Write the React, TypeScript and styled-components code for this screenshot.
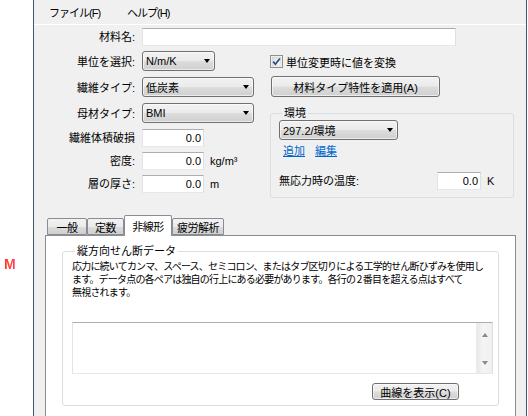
import React from 'react';
import styled, { createGlobalStyle } from 'styled-components';

const Global = createGlobalStyle`
    html, body {
        margin:0;
        padding:0;
        background:#fff;
        overflow:hidden;
    }
    body {
        font-family:"Liberation Sans", "Noto Sans CJK JP", sans-serif;
        font-size:11px;
        color:#000;
    }
`;

const Page = styled.div`
    display:flex;
    width:528px;
    height:416px;
    overflow:hidden;
`;

const Gutter = styled.div`
    width:33px;
    flex:none;
    padding:256px 0 0 4px;
    box-sizing:border-box;
`;

const Badge = styled.span`
    font-family:"Liberation Sans", sans-serif;
    font-weight:700;
    font-size:14px;
    background:linear-gradient(90deg, #ff2a3a 0%, #ff4a20 50%, #ff3a8a 100%);
    -webkit-background-clip:text;
    background-clip:text;
    color:transparent;
`;

const Window = styled.div`
    width:494px;
    height:430px;
    flex:none;
    box-sizing:border-box;
    border-left:1px solid #3d5867;
    border-right:1px solid #3d5867;
    background:#f0f0f0;
    display:flex;
    flex-direction:column;
`;

const MenuBar = styled.div`
    height:24px;
    flex:none;
    display:flex;
    align-items:center;
    gap:27px;
    padding-left:15px;
    border-bottom:1px solid #fff;
    font-size:11px;
    letter-spacing:-1px;
`;

const Form = styled.div`
    padding-top:3px;
`;

const TopRow = styled.div`
    display:grid;
    grid-template-columns:101px 314px;
    column-gap:7px;
    align-items:center;
    height:18px;
    margin-bottom:5px;
`;

const Columns = styled.div`
    display:flex;
`;

const LeftGrid = styled.div`
    width:237px;
    flex:none;
    display:grid;
    grid-template-columns:101px auto;
    grid-template-rows:21px 21px 21px 18px 18px 18px;
    column-gap:7px;
    row-gap:5px;
`;

const Label = styled.div`
    text-align:right;
    align-self:center;
    white-space:nowrap;
    line-height:14px;
`;

const Field = styled.div`
    display:flex;
    align-items:flex-start;
    gap:6px;
`;

const Unit = styled.span`
    align-self:center;
    line-height:14px;
`;

const ComboBox = styled.div<{ $w: number }>`
    width:${p => p.$w}px;
    height:20px;
    flex:none;
    box-sizing:border-box;
    border:1px solid #707070;
    border-radius:3px;
    background:linear-gradient(#f2f2f2 0%, #ebebeb 48%, #dddddd 52%, #cfcfcf 100%);
    box-shadow:inset 0 0 0 1px rgba(255,255,255,0.6);
    display:flex;
    align-items:center;
    justify-content:space-between;
    padding:0 4px 0 3px;
    white-space:nowrap;
`;

const Arrow = styled.span`
    width:0;
    height:0;
    border-left:3.5px solid transparent;
    border-right:3.5px solid transparent;
    border-top:4px solid #000;
`;

const TextInput = styled.div<{ $w: number; $right?: boolean }>`
    width:${p => p.$w}px;
    height:18px;
    flex:none;
    box-sizing:border-box;
    background:#fff;
    border:1px solid;
    border-color:#abadb3 #dbdfe6 #e3e9ef #e2e3ea;
    text-align:${p => (p.$right ? 'right' : 'left')};
    padding:0 2px;
    line-height:16px;
`;

const RightCol = styled.div`
    display:flex;
    flex-direction:column;
    gap:4px;
`;

const CheckRow = styled.label`
    height:21px;
    display:flex;
    align-items:center;
    gap:3px;
    margin-left:-1px;
`;

const Button = styled.div<{ $w: number; $h: number }>`
    width:${p => p.$w}px;
    height:${p => p.$h}px;
    box-sizing:border-box;
    border:1px solid #707070;
    border-radius:3px;
    background:linear-gradient(#f2f2f2 0%, #ebebeb 48%, #dddddd 52%, #cfcfcf 100%);
    box-shadow:inset 0 0 0 1px rgba(255,255,255,0.6);
    display:flex;
    align-items:center;
    justify-content:center;
    white-space:nowrap;
`;

const Group = styled.fieldset`
    margin:0;
    border:1px solid #d5dfe5;
    border-radius:3px;
    min-width:0;
`;

const Legend = styled.legend`
    padding:0 2px;
    margin-left:3px;
    line-height:12px;
    height:12px;
`;

const EnvGroup = styled(Group)`
    width:244px;
    box-sizing:border-box;
    margin:6px 0 0 -1px;
    padding:1px 6px 7px 8px;
    display:flex;
    flex-direction:column;
`;

const Links = styled.div`
    display:flex;
    gap:10px;
    padding-left:4px;
    margin-top:4px;
    line-height:14px;
`;

const Link = styled.a`
    color:#0066cc;
    text-decoration:underline;
`;

const TempRow = styled.div`
    display:flex;
    align-items:center;
    margin-top:14px;
`;

const TempLabel = styled.span`
    flex:1;
    line-height:14px;
`;

const TempUnit = styled.span`
    width:20px;
    margin-left:6px;
`;

const Tabs = styled.div`
    margin:17px 10px 0 11px;
    display:flex;
    flex-direction:column;
`;

const TabStrip = styled.div`
    display:flex;
    align-items:flex-end;
    height:20px;
    padding-left:2px;
    position:relative;
    z-index:1;
`;

const Tab = styled.div<{ $w: number; $active?: boolean }>`
    width:${p => p.$w}px;
    height:${p => (p.$active ? 21 : 17)}px;
    box-sizing:border-box;
    border:1px solid #898c95;
    border-bottom:${p => (p.$active ? 'none' : '1px solid #898c95')};
    border-radius:2px 2px 0 0;
    background:${p => (p.$active ? '#fff' : 'linear-gradient(#f2f2f2 0%, #ebebeb 50%, #dddddd 51%, #cfcfcf 100%)')};
    display:flex;
    align-items:center;
    justify-content:center;
    white-space:nowrap;
    letter-spacing:-0.5px;
    margin-bottom:${p => (p.$active ? -1 : 0)}px;
`;

const Panel = styled.div`
    background:#fff;
    border:1px solid #898c95;
    padding:9px 16px 14px 16px;
`;

const DataGroup = styled(Group)`
    padding:2px 5px 5px 9px;
    display:flex;
    flex-direction:column;
`;

const Para = styled.div`
    font-family:"Noto Sans CJK JP", sans-serif;
    font-size:10px;
    letter-spacing:-0.8px;
    line-height:13px;
    white-space:nowrap;
`;

const ParaLine = styled.span`
    display:block;
`;

const TextBox = styled.div`
    margin-top:24px;
    height:52px;
    box-sizing:border-box;
    border:1px solid;
    border-color:#abadb3 #dbdfe6 #e3e9ef #e2e3ea;
    display:flex;
    justify-content:flex-end;
`;

const ScrollBar = styled.div`
    width:16px;
    background:linear-gradient(90deg, #e9e9e9, #f4f4f4 40%, #f0f0f0);
    border-left:1px solid #ececec;
    display:flex;
    flex-direction:column;
    align-items:center;
    justify-content:space-between;
    padding:10px 0 8px;
    box-sizing:border-box;
`;

const ScrollArrow = styled.span<{ $up?: boolean }>`
    width:0;
    height:0;
    border-left:3.5px solid transparent;
    border-right:3.5px solid transparent;
    ${p => (p.$up ? 'border-bottom:4px solid #8a8a8a;' : 'border-top:4px solid #8a8a8a;')}
`;

const ButtonRow = styled.div`
    display:flex;
    justify-content:flex-end;
    padding-right:34px;
    margin-top:9px;
`;

const Combo = ({ width, value }: { width: number; value: string }) => (
    <ComboBox $w={width}>
        <span>{value}</span>
        <Arrow />
    </ComboBox>
);

const CheckIcon = () => (
    <svg width="13" height="13" viewBox="0 0 13 13">
        <defs>
            <linearGradient id="cb" x1="0" y1="0" x2="1" y2="1">
                <stop offset="0" stopColor="#dcdcdc" />
                <stop offset="1" stopColor="#fbfbfb" />
            </linearGradient>
        </defs>
        <rect x="0.5" y="0.5" width="12" height="12" fill="#fff" stroke="#8f8f8f" />
        <rect x="2" y="2" width="9" height="9" fill="url(#cb)" stroke="#c4c4c4" strokeWidth="0.6" />
        <path d="M3.2 6.6 L5.4 9.2 L9.9 3.4" fill="none" stroke="#2a4a8c" strokeWidth="1.7" />
    </svg>
);

const tabs = [
    { label: '一般', w: 40 },
    { label: '定数', w: 37 },
    { label: '非線形', w: 48, active: true },
    { label: '疲労解析', w: 52 },
];

const lines = [
    '応力に続いてカンマ、スペース、セミコロン、またはタブ区切りによる工学的せん断ひずみを使用し',
    'ます。データ点の各ペアは独自の行上にある必要があります。各行の 2 番目を超える点はすべて',
    '無視されます。',
];

const App = () => {
    return (
        <Page>
            <Global />
            <Gutter><Badge>M</Badge></Gutter>
            <Window>
                <MenuBar>
                    <span>ファイル(F)</span>
                    <span>ヘルプ(H)</span>
                </MenuBar>
                <Form>
                    <TopRow>
                        <Label>材料名:</Label>
                        <TextInput $w={314} />
                    </TopRow>
                    <Columns>
                        <LeftGrid>
                            <Label>単位を選択:</Label>
                            <Field><Combo width={73} value="N/m/K" /></Field>
                            <Label>繊維タイプ:</Label>
                            <Field><Combo width={112} value="低炭素" /></Field>
                            <Label>母材タイプ:</Label>
                            <Field><Combo width={112} value="BMI" /></Field>
                            <Label>繊維体積破損</Label>
                            <Field><TextInput $w={62} $right>0.0</TextInput></Field>
                            <Label>密度:</Label>
                            <Field><TextInput $w={62} $right>0.0</TextInput><Unit>kg/m³</Unit></Field>
                            <Label>層の厚さ:</Label>
                            <Field><TextInput $w={62} $right>0.0</TextInput><Unit>m</Unit></Field>
                        </LeftGrid>
                        <RightCol>
                            <CheckRow><CheckIcon />単位変更時に値を変換</CheckRow>
                            <Button $w={169} $h={21}>材料タイプ特性を適用(A)</Button>
                            <EnvGroup>
                                <Legend>環境</Legend>
                                <Combo width={119} value="297.2/環境" />
                                <Links>
                                    <Link>追加</Link>
                                    <Link>編集</Link>
                                </Links>
                                <TempRow>
                                    <TempLabel>無応力時の温度:</TempLabel>
                                    <TextInput $w={44} $right>0.0</TextInput>
                                    <TempUnit>K</TempUnit>
                                </TempRow>
                            </EnvGroup>
                        </RightCol>
                    </Columns>
                </Form>
                <Tabs>
                    <TabStrip>
                        {tabs.map(t => (
                            <Tab key={t.label} $w={t.w} $active={t.active}>{t.label}</Tab>
                        ))}
                    </TabStrip>
                    <Panel>
                        <DataGroup>
                            <Legend>縦方向せん断データ</Legend>
                            <Para>
                                {lines.map(l => <ParaLine key={l}>{l}</ParaLine>)}
                            </Para>
                            <TextBox>
                                <ScrollBar>
                                    <ScrollArrow $up />
                                    <ScrollArrow />
                                </ScrollBar>
                            </TextBox>
                            <ButtonRow>
                                <Button $w={87} $h={17}>曲線を表示(C)</Button>
                            </ButtonRow>
                        </DataGroup>
                    </Panel>
                </Tabs>
            </Window>
        </Page>
    );
};

export default App;
